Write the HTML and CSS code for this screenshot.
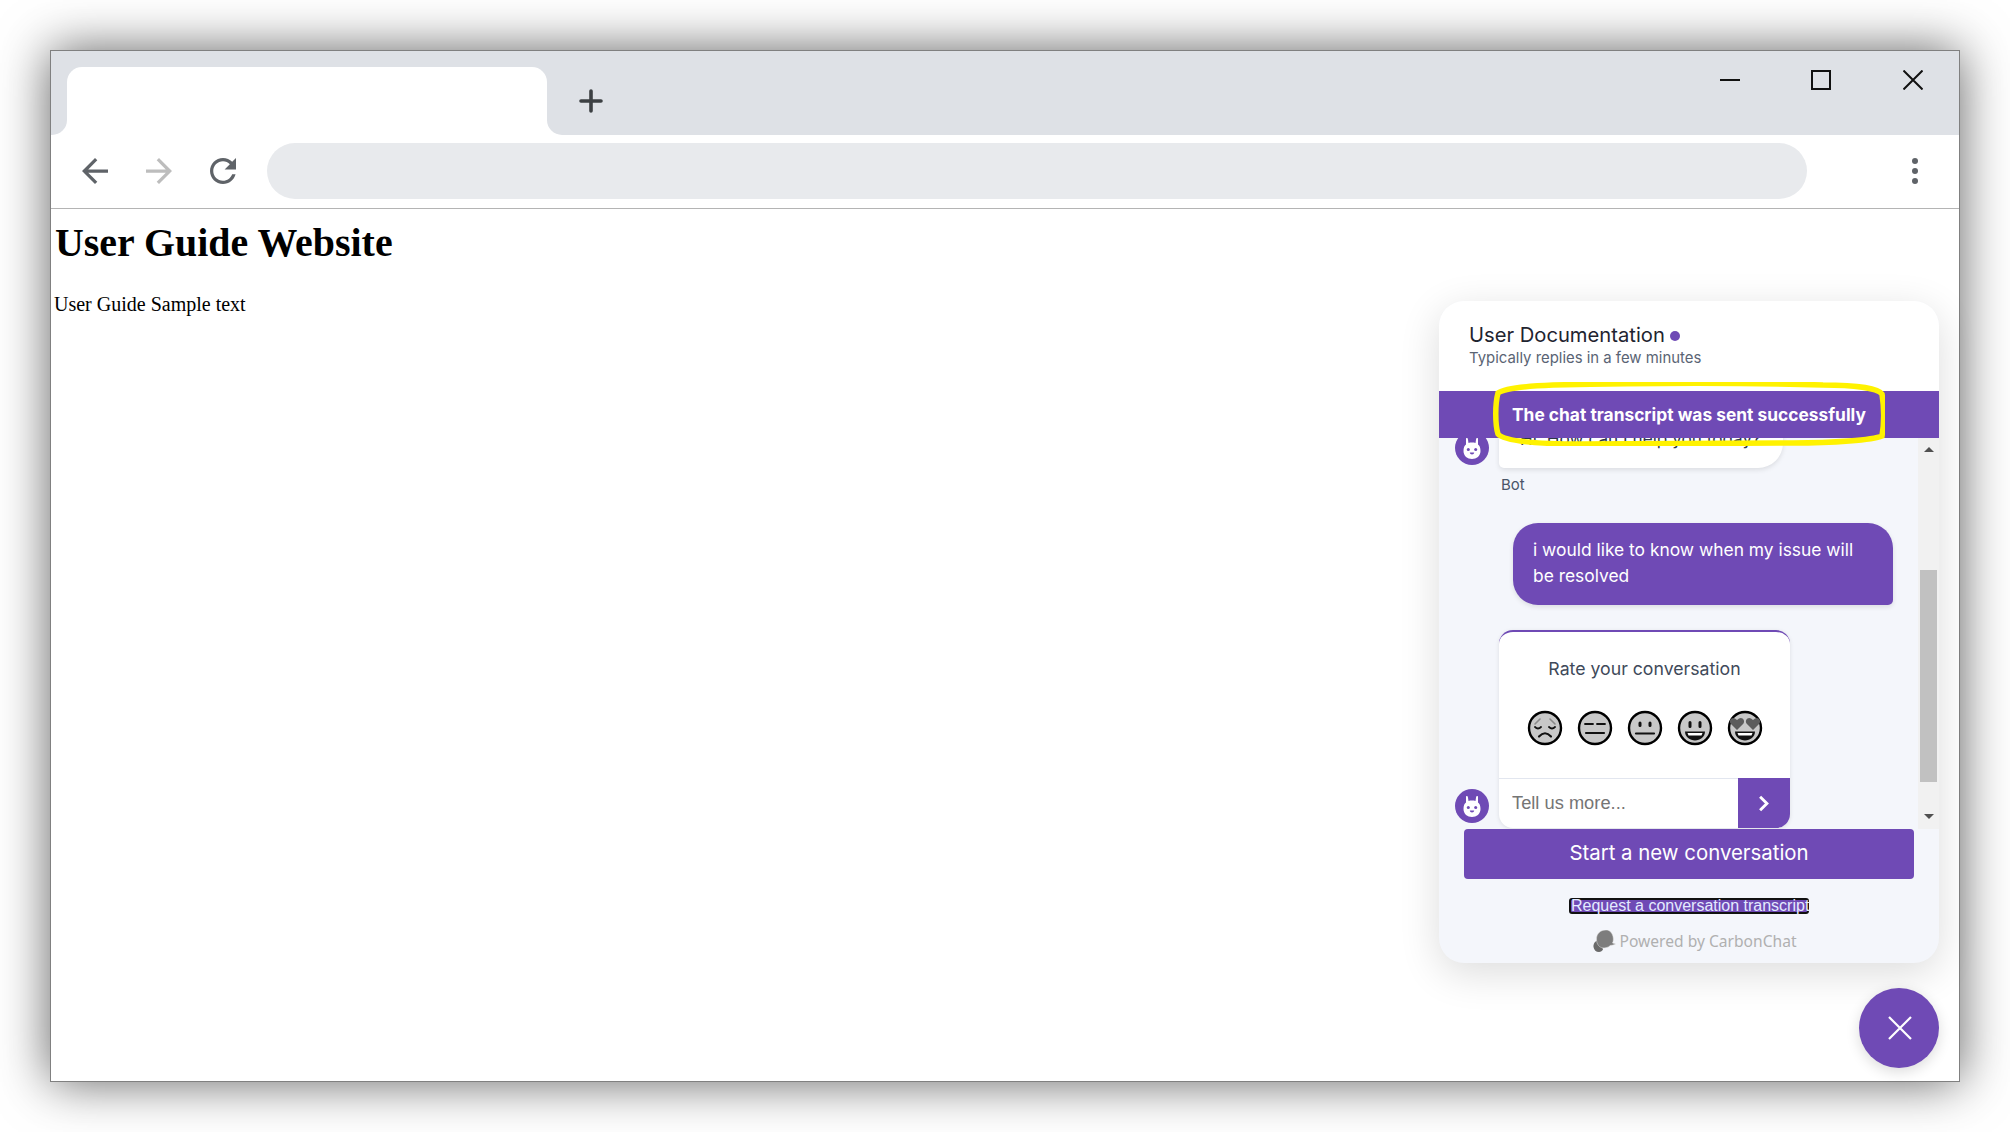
FILE: index.html
```html
<!DOCTYPE html>
<html lang="en">
  <head>
    <meta charset="UTF-8" />
    <meta name="viewport" content="width=device-width, initial-scale=1.0" />
    <title>User Guide Website</title>
    <link rel="stylesheet" href="styles.css">
  </head>
  <body>
    <div class="window">
      <div class="tabstrip">
        <div class="strip-gap"></div>
        <div class="tab-slot"><div class="tab"></div></div>
        <div class="strip-rest">
          <svg class="plus" viewBox="0 0 24 24"><path d="M12 2V22M2 12H22" /></svg>
          <div class="window-controls">
            <svg class="win-icon win-min" viewBox="0 0 20 20"><path d="M0 10H20" /></svg>
            <svg class="win-icon" viewBox="0 0 20 20"><rect x="1" y="1" width="18" height="18" /></svg>
            <svg class="win-icon" viewBox="0 0 20 20"><path d="M0.5 0.5L19.5 19.5M19.5 0.5L0.5 19.5" /></svg>
          </div>
        </div>
      </div>

      <div class="toolbar">
        <svg class="nav-icon" viewBox="4 4 16 16"><path d="M20 11H7.83l5.59-5.59L12 4l-8 8 8 8 1.41-1.41L7.83 13H20v-2z" /></svg>
        <svg class="nav-icon nav-disabled" viewBox="4 4 16 16"><path d="M4 11h12.17l-5.59-5.59L12 4l8 8-8 8-1.41-1.41L16.17 13H4v-2z" /></svg>
        <svg class="nav-icon" viewBox="4 4 16 16"><path d="M17.65 6.35C16.2 4.9 14.21 4 12 4c-4.42 0-7.99 3.58-7.99 8s3.57 8 7.99 8c3.73 0 6.84-2.55 7.73-6h-2.08c-.82 2.33-3.04 4-5.65 4-3.31 0-6-2.69-6-6s2.69-6 6-6c1.66 0 3.14.69 4.22 1.78L13 11h7V4l-2.35 2.35z" /></svg>
        <div class="address-bar"></div>
        <div class="menu-dots"><span></span><span></span><span></span></div>
      </div>

      <main class="page">
        <h1 class="page-title">User Guide Website</h1>
        <p class="page-text">User Guide Sample text</p>

        <section class="chat-panel">
          <header class="chat-header">
            <div class="chat-title">User Documentation<span class="status-dot"></span></div>
            <div class="chat-subtitle">Typically replies in a few minutes</div>
          </header>

          <div class="chat-banner">The chat transcript was sent successfully</div>

          <svg class="highlight-ring" viewBox="0 0 392 64">
            <path d="M60 3C150 1 260 1 330 3C360 3 385 6 389 12C391 25 391 42 389 54C380 58 340 61 300 61L90 62C50 62 12 60 5 52C2 42 2 22 5 11C12 6 35 4 60 3Z" />
          </svg>

          <div class="chat-body">
            <div class="messages">
              <div class="message-list">
                <div class="bot-row">
                  <svg class="avatar" viewBox="0 0 34 34">
                    <use href="#bunny" />
                  </svg>
                  <div class="bot-bubble">Hi. How can I help you today?</div>
                </div>
                <div class="sender-name">Bot</div>

                <div class="user-bubble">i would like to know when my issue will be resolved</div>

                <div class="bot-row rating-row">
                  <svg class="avatar" viewBox="0 0 34 34">
                    <use href="#bunny" />
                  </svg>
                  <div class="rating-card">
                    <div class="rating-title">Rate your conversation</div>
                    <div class="rating-faces">
                      <svg class="face" viewBox="0 0 36 36">
                        <circle class="face-bg" cx="18" cy="18" r="16" />
                        <path class="face-soft" d="M8 14L13 9M28 14L23 9" />
                        <path class="face-line" d="M8 17Q11 20 14 17M22 17Q25 20 28 17" />
                        <path class="face-bold" d="M12 26.500Q18 20 24 26.500" />
                      </svg>
                      <svg class="face" viewBox="0 0 36 36">
                        <circle class="face-bg" cx="18" cy="18" r="16" />
                        <path class="face-line" d="M8 14H16M20 14H28" />
                        <path class="face-bold" d="M9 23H27" />
                      </svg>
                      <svg class="face" viewBox="0 0 36 36">
                        <circle class="face-bg" cx="18" cy="18" r="16" />
                        <path class="face-eye" d="M13 13V15.500M23 13V15.500" />
                        <path class="face-bold" d="M9 23.500H27" />
                      </svg>
                      <svg class="face" viewBox="0 0 36 36">
                        <circle class="face-bg" cx="18" cy="18" r="16" />
                        <path class="face-eye" d="M13 12.500V16.500M23 12.500V16.500" />
                        <path class="face-mouth" d="M8 21.500H28C28 27 23 30.500 18 30.500S8 27 8 21.500Z" />
                        <path class="face-teeth" d="M10.500 23H25.500L24.500 25.500H11.500Z" />
                      </svg>
                      <svg class="face" viewBox="0 0 36 36">
                        <circle class="face-bg" cx="18" cy="18" r="16" />
                        <path class="face-heart" d="M10 20L3.500 13.500C1.500 10 5 6.500 8 8.500L10 10L12 8.500C15 6.500 18.500 10 16.500 13.500Z" />
                        <path class="face-heart" d="M26 20L19.500 13.500C17.500 10 21 6.500 24 8.500L26 10L28 8.500C31 6.500 34.500 10 32.500 13.500Z" />
                        <path class="face-mouth" d="M8 21.500H28C28 27 23 30.500 18 30.500S8 27 8 21.500Z" />
                        <path class="face-teeth" d="M10.500 23H25.500L24.500 25.500H11.500Z" />
                      </svg>
                    </div>
                    <div class="rating-input-row">
                      <input class="rating-input" type="text" placeholder="Tell us more..." />
                      <button class="rating-send">
                        <svg viewBox="0 0 12 20"><path d="M2 2L10 10L2 18" /></svg>
                      </button>
                    </div>
                  </div>
                </div>
              </div>
            </div>

            <div class="scrollbar">
              <span class="scroll-up"></span>
              <span class="scroll-thumb"></span>
              <span class="scroll-down"></span>
            </div>
          </div>

          <footer class="chat-footer">
            <button class="new-conversation">Start a new conversation</button>
            <a href="#" class="transcript-link">Request a conversation transcript</a>
            <div class="powered-by">
              <svg class="powered-icon" viewBox="0 0 23 22">
                <path class="bubble-back" d="M7 10C2 10 0 14 0.500 17C1 20 3 22 6 22C8 22 9 21 10 19.500Z" />
                <path class="bubble-front" d="M13 0C7 0 3.500 4 3.500 9C3.500 14 6 18 11 18C13 18 14 17 15.500 17L17 15.500L20 15L22.500 14L19.500 13C20.500 11 20.500 9 20 6.500C19 2.500 16.500 0 13 0Z" />
              </svg>
              Powered by CarbonChat
            </div>
          </footer>
        </section>

        <button class="chat-toggle">
          <svg viewBox="0 0 24 24"><path d="M1 1L23 23M23 1L1 23" /></svg>
        </button>
      </main>
    </div>

    <svg class="svg-defs">
      <symbol id="bunny" viewBox="0 0 34 34">
        <circle cx="17" cy="17" r="17" fill="#6f4ab5" />
        <path d="M8.500 20C8.500 16.500 9.500 14.500 11 13.500V7.500C11 6.800 12.500 6.800 12.800 7.500L13.500 12C15.500 11.400 18.500 11.400 20.500 12L21.200 7.500C21.500 6.800 23 6.800 23 7.500V13.500C24.500 14.500 25.500 16.500 25.500 20C25.500 25 21.500 28 17 28C12.500 28 8.500 25 8.500 20Z" fill="#fff" />
        <circle cx="13.300" cy="18.500" r="1.500" fill="#6f4ab5" />
        <circle cx="20.700" cy="18.500" r="1.500" fill="#6f4ab5" />
        <path d="M14.800 21.500H19.200C19.200 24 14.800 24 14.800 21.500Z" fill="#6f4ab5" />
      </symbol>
    </svg>
  </body>
</html>
```

FILE: styles.css
```css
* {
  margin: 0;
  padding: 0;
  box-sizing: border-box;
}

html,
body {
  height: 100%;
  overflow: hidden;
}

body {
  background-color: white;
  padding: 50px;
}

/* display: none breaks the symbol in some browsers */
.svg-defs {
  width: 0;
  height: 0;
  position: absolute;
}

/* Browser window */
.window {
  width: 1910px;
  height: 1032px;
  display: flex;
  flex-direction: column;
  border: 1px solid #808080;
  background-color: white;
  box-shadow: 0 0 48px rgba(0, 0, 0, 0.62);
}

.tabstrip {
  display: flex;
  height: 84px;
  flex-shrink: 0;
}

.strip-gap {
  width: 16px;
  background-color: #dee1e6;
  border-bottom-right-radius: 15px;
}

.tab-slot {
  width: 480px;
  background-color: #dee1e6;
  padding-top: 16px;
}

.tab {
  height: 68px;
  background-color: white;
  border-radius: 15px 15px 0 0;
}

.strip-rest {
  flex: 1;
  display: flex;
  align-items: flex-start;
  background-color: #dee1e6;
  border-bottom-left-radius: 15px;
  padding-left: 32px;
  padding-right: 36px;
}

.plus {
  width: 24px;
  height: 24px;
  margin-top: 38px;
}

.plus path {
  fill: none;
  stroke: #3c4043;
  stroke-width: 3.600;
  stroke-linecap: round;
}

.window-controls {
  display: flex;
  gap: 72px;
  margin-left: auto;
  margin-top: 19px;
}

.win-icon {
  width: 20px;
  height: 20px;
}

.win-min {
  margin-right: -1px;
}

.win-icon path,
.win-icon rect {
  fill: none;
  stroke: #111;
  stroke-width: 2;
}

.toolbar {
  height: 74px;
  flex-shrink: 0;
  display: flex;
  align-items: center;
  padding-left: 31px;
  padding-bottom: 1px;
  border-bottom: 1px solid #b4b4b4;
}

.nav-icon {
  width: 26px;
  height: 26px;
  margin-right: 38px;
  fill: #5f6368;
}

.nav-disabled {
  fill: #bdbdbd;
}

.address-bar {
  width: 1540px;
  height: 56px;
  margin-left: -7px;
  border-radius: 28px;
  background-color: #e8eaed;
}

.menu-dots {
  display: flex;
  flex-direction: column;
  gap: 4px;
  margin-left: 105px;
}

.menu-dots span {
  width: 6px;
  height: 6px;
  border-radius: 50%;
  background-color: #5f6368;
}

/* Page content */
.page {
  flex: 1;
  position: relative;
  padding: 11px 3px 8px;
  font-family: "Liberation Serif", serif;
  color: black;
}

.page-title {
  font-size: 39.900px;
  line-height: 46px;
  margin-left: 1px;
}

.page-text {
  font-size: 20px;
  line-height: 23px;
  margin-top: 27px;
}

/* Chat widget */
.chat-panel {
  position: absolute;
  top: 92px;
  right: 20px;
  width: 500px;
  height: 662px;
  display: flex;
  flex-direction: column;
  border-radius: 25px;
  background-color: #f4f6fb;
  box-shadow: 0 10px 40px rgba(0, 0, 0, 0.14);
  font-family: Inter, sans-serif;
}

.chat-header {
  height: 90px;
  flex-shrink: 0;
  padding: 21px 30px 0;
  background-color: white;
  border-radius: 25px 25px 0 0;
}

.chat-title {
  display: flex;
  align-items: center;
  font-size: 20.200px;
  line-height: 26px;
  color: #1f2430;
}

.status-dot {
  width: 10px;
  height: 10px;
  margin-left: 5px;
  margin-top: 2px;
  border-radius: 50%;
  background-color: #6f4ab5;
}

.chat-subtitle {
  font-size: 14.900px;
  line-height: 20px;
  color: #5a6474;
}

.chat-banner {
  height: 47px;
  flex-shrink: 0;
  display: flex;
  align-items: center;
  justify-content: center;
  background-color: #6f4ab5;
  color: white;
  font-size: 17.350px;
  font-weight: 700;
}

.highlight-ring {
  position: absolute;
  top: 81px;
  left: 54px;
  width: 392px;
  height: 64px;
  z-index: 2;
}

.highlight-ring path {
  fill: none;
  stroke: #fff200;
  stroke-width: 5.500;
}

.chat-body {
  flex: 0 0 391px;
  display: flex;
  min-height: 0;
}

.messages {
  flex: 1;
  overflow: hidden;
}

.message-list {
  margin-top: -22px;
}

.bot-row {
  display: flex;
  align-items: flex-end;
  padding-left: 16px;
  gap: 10px;
}

.avatar {
  width: 34px;
  height: 34px;
  margin-bottom: 3px;
  flex-shrink: 0;
}

.bot-bubble {
  width: 284px;
  height: 52px;
  padding: 10px 0 0 21px;
  font-size: 17.200px;
  line-height: 26px;
  white-space: nowrap;
  color: #2d3748;
  background-color: white;
  border-radius: 5px 5px 25px 5px;
  box-shadow: 0 2px 5px rgba(0, 0, 0, 0.1);
}

.sender-name {
  margin: 8px 0 0 62px;
  font-size: 15px;
  line-height: 18px;
  color: #4a5568;
}

.user-bubble {
  width: 380px;
  height: 82px;
  margin: 29px 0 0 74px;
  padding: 14px 24px 14px 20px;
  font-size: 17.400px;
  line-height: 26px;
  color: white;
  background-color: #6f4ab5;
  border-radius: 25px 25px 5px 25px;
  box-shadow: 0 2px 5px rgba(0, 0, 0, 0.1);
}

.rating-row {
  margin-top: 25px;
}

.rating-row .avatar {
  margin-bottom: 5px;
}

.rating-card {
  width: 291px;
  height: 198px;
  display: flex;
  flex-direction: column;
  border-top: 2px solid #6f4ab5;
  border-radius: 14px;
  background-color: white;
  box-shadow: 0 1px 4px rgba(0, 0, 0, 0.1);
  overflow: hidden;
}

.rating-title {
  margin-top: 26px;
  text-align: center;
  font-size: 17.700px;
  line-height: 22px;
  color: #3f4a5a;
}

.rating-faces {
  display: flex;
  justify-content: center;
  gap: 14px;
  margin-top: 30px;
}

.face {
  width: 36px;
  height: 36px;
}

.face-bg {
  fill: #c8c8c8;
  stroke: #000;
  stroke-width: 2.400;
}

.face-line,
.face-bold,
.face-eye,
.face-soft {
  fill: none;
  stroke: #111;
  stroke-linecap: round;
}

.face-line {
  stroke-width: 1.800;
}

.face-bold {
  stroke-width: 2.200;
}

.face-eye {
  stroke-width: 3;
}

.face-soft {
  stroke: #8a8a8a;
  stroke-width: 1.600;
}

.face-mouth {
  fill: #111;
}

.face-teeth {
  fill: #fff;
}

.face-heart {
  fill: #5c5c5c;
}

.rating-input-row {
  display: flex;
  height: 50px;
  margin-top: auto;
  border-top: 1px solid #e2e6ef;
}

.rating-input {
  flex: 1;
  min-width: 0;
  border: none;
  outline: none;
  padding-left: 13px;
  padding-bottom: 2px;
  font-family: "Liberation Sans", sans-serif;
  font-size: 18.300px;
  background: none;
}

.rating-input::placeholder {
  color: #757575;
}

.rating-send {
  width: 52px;
  margin-top: -1px;
  padding-right: 2px;
  display: flex;
  align-items: center;
  justify-content: center;
  border: none;
  background-color: #6f4ab5;
}

.rating-send svg {
  width: 11px;
  height: 17px;
}

.rating-send path {
  fill: none;
  stroke: white;
  stroke-width: 3.400;
}

/* Scrollbar */
.scrollbar {
  width: 21px;
  flex-shrink: 0;
  display: flex;
  flex-direction: column;
  align-items: center;
  background-color: #f1f1f1;
}

.scroll-up,
.scroll-down {
  width: 0;
  height: 0;
  border-left: 5px solid transparent;
  border-right: 5px solid transparent;
}

.scroll-up {
  margin-top: 9px;
  border-bottom: 5px solid #505050;
}

.scroll-down {
  margin-top: 32px;
  border-top: 5px solid #505050;
}

.scroll-thumb {
  width: 17px;
  height: 212px;
  margin-top: 118px;
  background-color: #c1c1c1;
}

/* Footer */
.chat-footer {
  flex: 1;
  display: flex;
  flex-direction: column;
  align-items: center;
}

.new-conversation {
  width: 450px;
  height: 50px;
  flex-shrink: 0;
  padding-bottom: 3px;
  border: none;
  border-radius: 4px;
  background-color: #6f4ab5;
  color: white;
  font-family: Inter, sans-serif;
  font-size: 20.400px;
}

.transcript-link {
  display: block;
  width: 240px;
  height: 16px;
  margin-top: 19px;
  border: 2px solid #111;
  border-radius: 3px;
  background-color: #6f4ab5;
  color: #e4eaff;
  font-family: "Liberation Sans", sans-serif;
  font-size: 16px;
  line-height: 11px;
  text-align: center;
  white-space: nowrap;
  text-decoration: none;
}

.powered-by {
  display: flex;
  align-items: center;
  gap: 3px;
  margin-top: 16px;
  margin-left: 12px;
  font-family: "Noto Sans", sans-serif;
  font-size: 15.600px;
  line-height: 21px;
  color: #b0b0b0;
}

.powered-icon {
  width: 23px;
  height: 22px;
}

.bubble-back {
  fill: #6a6a6a;
}

.bubble-front {
  fill: #7d7d7d;
  stroke: #e0e0e0;
  stroke-width: 0.500;
}

.chat-toggle {
  position: absolute;
  right: 20px;
  bottom: 13px;
  width: 80px;
  height: 80px;
  display: flex;
  align-items: center;
  justify-content: center;
  border: none;
  border-radius: 50%;
  background-color: #6f4ab5;
  box-shadow: 0 4px 14px rgba(0, 0, 0, 0.14);
}

.chat-toggle svg {
  width: 24px;
  height: 24px;
  margin-left: 2px;
  margin-top: 0;
}

.chat-toggle path {
  fill: none;
  stroke: white;
  stroke-width: 2.200;
}
```
